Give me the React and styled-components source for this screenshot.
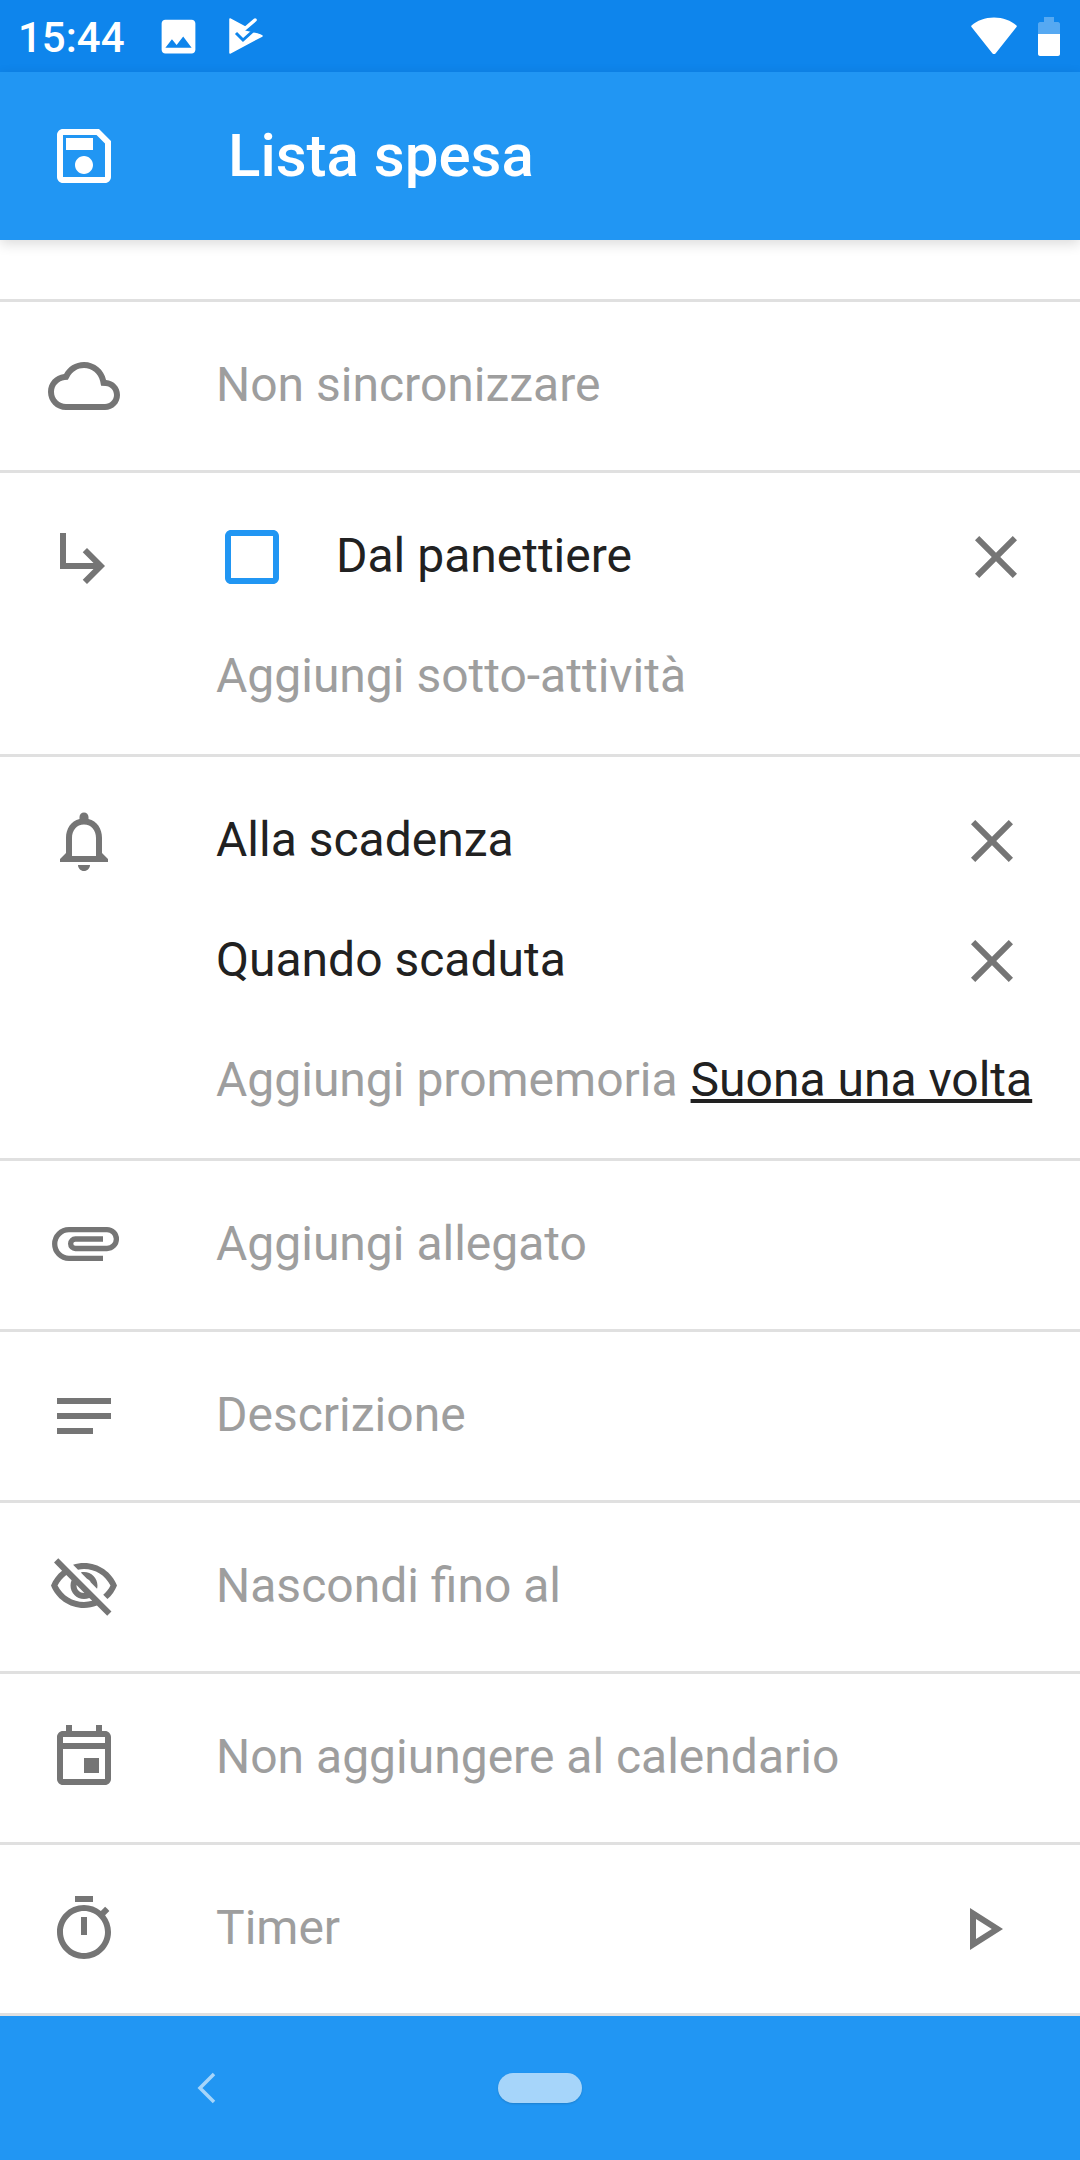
import React from "react";
import styled, { createGlobalStyle } from "styled-components";

const GlobalStyle = createGlobalStyle`
  html, body {
    margin: 0;
    padding: 0;
    background: #fff;
  }
  * {
    box-sizing: border-box;
  }
`;

const Screen = styled.div`
  width: 1080px;
  height: 2160px;
  display: flex;
  flex-direction: column;
  background: #fff;
  font-family: Roboto, sans-serif;
  overflow: hidden;
`;

const StatusBar = styled.div`
  height: 72px;
  flex: none;
  background: #0e85ec;
  display: flex;
  align-items: center;
  padding: 0 20px 0 18px;
  color: #fff;
`;

const Clock = styled.span`
  font-size: 42px;
  font-weight: 500;
  margin: 3px 31px 0 0;
`;

const StatusSpacer = styled.div`
  flex: 1;
`;

const Toolbar = styled.div`
  height: 168px;
  flex: none;
  background: #2196f3;
  display: flex;
  align-items: center;
  padding-left: 48px;
  position: relative;
  box-shadow: 0 4px 12px rgba(0, 0, 0, 0.14);
`;

const Title = styled.span`
  margin: 0 0 2px 108px;
  color: #fff;
  font-size: 60px;
  font-weight: 500;
`;

const Content = styled.div`
  flex: 1;
  padding-top: 59px;
  display: flex;
  flex-direction: column;
`;

const Row = styled.div`
  border-top: 3px solid #e0e0e0;
  display: flex;
  padding: 48px 0 0 48px;
  height: ${(p) => p.$height}px;
`;

const EndRule = styled.div`
  border-top: 3px solid #e0e0e0;
`;

const RowBody = styled.div`
  flex: 1;
  margin-left: 96px;
  display: flex;
  flex-direction: column;
  min-width: 0;
`;

const Line = styled.div`
  display: flex;
  align-items: center;
  height: 72px;
  margin-bottom: ${(p) => p.$gap || 0}px;
`;

const Hint = styled.span`
  font-size: 48px;
  color: #9e9e9e;
  white-space: nowrap;
  margin-bottom: 3px;
  flex: ${(p) => (p.$grow ? 1 : "none")};
`;

const Label = styled.span`
  font-size: 48px;
  color: #212121;
  flex: 1;
  white-space: nowrap;
  margin-bottom: 3px;
`;

const SubLabel = styled(Label)`
  margin-left: 48px;
`;

const RingLink = styled.span`
  font-size: 48px;
  color: #212121;
  text-decoration: underline;
  margin: 0 0 3px 13px;
  white-space: nowrap;
`;

const Glyph = styled.svg`
  flex: none;
  width: ${(p) => p.$size || 72}px;
  height: ${(p) => p.$size || 72}px;
  fill: ${(p) => p.$color || "#757575"};
  margin-right: ${(p) => p.$right || 0}px;
`;

const NavBar = styled.div`
  flex: none;
  height: 144px;
  background: #2196f3;
  display: flex;
  align-items: center;
  padding-left: 196px;
`;

const NavPill = styled.div`
  width: 84px;
  height: 30px;
  margin-left: 282px;
  border-radius: 15px;
  background: #a6d5fa;
  box-shadow: 0 1px 2px rgba(0, 0, 0, 0.15);
`;

const paths = {
  save: "M17 3H5c-1.11 0-2 .9-2 2v14c0 1.1.89 2 2 2h14c1.1 0 2-.9 2-2V7l-4-4zm2 16H5V5h11.17L19 7.83V19zm-7-7c-1.66 0-3 1.34-3 3s1.34 3 3 3 3-1.34 3-3-1.34-3-3-3zM6 6h9v4H6z",
  cloud: "M19.35 10.04C18.67 6.59 15.64 4 12 4 9.11 4 6.6 5.64 5.35 8.04 2.34 8.36 0 10.91 0 14c0 3.31 2.69 6 6 6h13c2.76 0 5-2.24 5-5 0-2.64-2.05-4.78-4.65-4.96zM19 18H6c-2.21 0-4-1.79-4-4 0-2.05 1.53-3.76 3.56-3.97l1.07-.11.5-.95C8.08 7.14 9.94 6 12 6c2.62 0 4.88 1.86 5.39 4.43l.3 1.5 1.53.11c1.56.1 2.78 1.41 2.78 2.96 0 1.65-1.35 3-3 3z",
  subtask: "M19 15l-6 6-1.42-1.42L15.17 16H4V4h2v10h9.17l-3.59-3.58L13 9l6 6z",
  box: "M19 5v14H5V5h14m0-2H5c-1.1 0-2 .9-2 2v14c0 1.1.9 2 2 2h14c1.1 0 2-.9 2-2V5c0-1.1-.9-2-2-2z",
  close: "M19 6.41L17.59 5 12 10.59 6.41 5 5 6.41 10.59 12 5 17.59 6.41 19 12 13.41 17.59 19 19 17.59 13.41 12z",
  bell: "M12 22c1.1 0 2-.9 2-2h-4c0 1.1.9 2 2 2zm6-6v-5c0-3.07-1.63-5.64-4.5-6.32V4c0-.83-.67-1.5-1.5-1.5s-1.5.67-1.5 1.5v.68C7.64 5.36 6 7.92 6 11v5l-2 2v1h16v-1l-2-2zm-2 1H8v-6c0-2.48 1.51-4.5 4-4.5s4 2.02 4 4.5v6z",
  notes: "M3 18h12v-2H3v2zM3 6v2h18V6H3zm0 7h18v-2H3v2z",
  hide: "M12 6c3.79 0 7.17 2.13 8.82 5.5-.59 1.22-1.42 2.27-2.41 3.12l1.41 1.41c1.39-1.23 2.49-2.77 3.18-4.53C21.27 7.11 17 4 12 4c-1.27 0-2.49.2-3.64.57l1.65 1.65C10.66 6.09 11.32 6 12 6zm-1.07 1.14L13 9.21c.57.25 1.03.71 1.28 1.28l2.07 2.07c.08-.34.14-.7.14-1.07C16.5 9.01 14.48 7 12 7c-.37 0-.72.05-1.07.14zM2.01 3.87l2.68 2.68C3.06 7.83 1.77 9.53 1 11.5 2.73 15.89 7 19 12 19c1.52 0 2.98-.29 4.32-.82l3.42 3.42 1.41-1.41L3.42 2.45 2.01 3.87zm7.5 7.5l2.61 2.61c-.04.01-.08.02-.12.02-1.38 0-2.5-1.12-2.5-2.5 0-.05.01-.08.01-.13zm-3.4-3.4l1.75 1.75c-.23.55-.36 1.15-.36 1.78 0 2.48 2.02 4.5 4.5 4.5.63 0 1.23-.13 1.77-.36l.98.98c-.88.24-1.8.38-2.75.38-3.79 0-7.17-2.13-8.82-5.5.7-1.43 1.72-2.61 2.93-3.53z",
  event: "M17 12h-5v5h5v-5zM16 1v2H8V1H6v2H5c-1.11 0-2 .9-2 2v14c0 1.1.9 2 2 2h14c1.1 0 2-.9 2-2V5c0-1.1-.9-2-2-2h-1V1h-2zM19 19H5V9h14v10zM19 7H5V5h14v2z",
  timer: "M15 1H9v2h6V1zm-4 13h2V8h-2v6zm8.03-6.61l1.42-1.42c-.43-.51-.9-.99-1.41-1.41l-1.42 1.42C16.07 4.74 14.12 4 12 4c-4.97 0-9 4.03-9 9s4.02 9 9 9 9-4.03 9-9c0-2.12-.74-4.07-1.97-5.61zM12 20c-3.87 0-7-3.13-7-7s3.13-7 7-7 7 3.13 7 7-3.13 7-7 7z",
  play: "M10 8.64L15.27 12 10 15.36V8.64M8 5v14l11-7L8 5z",
  image: "M21 19V5c0-1.1-.9-2-2-2H5c-1.1 0-2 .9-2 2v14c0 1.1.9 2 2 2h14c1.1 0 2-.9 2-2zM8.5 13.5l2.5 3.01L14.5 12l4.5 6H5l3.5-4.5z",
};

const Icon = ({ name, ...rest }) => (
  <Glyph viewBox="0 0 24 24" {...rest}>
    <path d={paths[name]} />
  </Glyph>
);

// wider than the stock material attachment path
const ClipIcon = () => (
  <Glyph viewBox="0 0 72 72" $color="none">
    <path
      d="M55 49.3H21A14.3 14.3 0 0 1 21 20.7H59A9.4 9.4 0 0 1 59 39.5H27.4A4.75 4.75 0 0 1 27.4 30H55"
      stroke="#757575"
      strokeWidth="5.3"
    />
  </Glyph>
);

const TasksLogo = () => (
  <Glyph viewBox="0 0 36 36" $size={36} $color="#fff" $right={0}>
    <path d="M1 1L33 18 1 35z" stroke="#fff" strokeWidth="1.5" strokeLinejoin="round" />
    <path d="M14 12L32 2V16z" fill="#0e85ec" />
    <path d="M7 15l7 7 10-9" fill="none" stroke="#0e85ec" strokeWidth="3" />
    <path d="M12 14L26 2" fill="none" stroke="#fff" strokeWidth="3.5" strokeLinecap="round" />
  </Glyph>
);

const Wifi = () => (
  <Glyph viewBox="0 0 46 37" $size={46} $color="#fff" $right={21}>
    <path d="M23 0c9 0 17 3 22.5 8 .5.5.5 1 0 1.5L24.5 36c-.8.8-2 .8-3 0L.5 9.5C0 9 0 8.5.5 8 6 3 14 0 23 0z" />
  </Glyph>
);

const Battery = () => (
  <svg width="22" height="39" viewBox="0 0 22 39">
    <path d="M6 0h10v5h4c1 0 2 1 2 2v10H0V7c0-1 1-2 2-2h4z" fill="#fff" opacity="0.3" />
    <path d="M0 17h22v20c0 1-1 2-2 2H2c-1 0-2-1-2-2z" fill="#fff" />
  </svg>
);

const BackChevron = () => (
  <svg width="20" height="32" viewBox="0 0 20 32" fill="none">
    <path d="M18 2L4 16l14 14" stroke="#a6d5fa" strokeWidth="3.5" />
  </svg>
);

const SimpleRow = ({ icon, children, right }) => (
  <Row $height={171}>
    {icon}
    <RowBody>
      <Line>
        <Hint $grow>{children}</Hint>
        {right}
      </Line>
    </RowBody>
  </Row>
);

export default function App() {
  return (
    <Screen>
      <GlobalStyle />
      <StatusBar>
        <Clock>15:44</Clock>
        <Icon name="image" $size={45} $color="#fff" $right={28} />
        <TasksLogo />
        <StatusSpacer />
        <Wifi />
        <Battery />
      </StatusBar>
      <Toolbar>
        <Icon name="save" $color="#fff" />
        <Title>Lista spesa</Title>
      </Toolbar>
      <Content>
        <SimpleRow icon={<Icon name="cloud" />}>Non sincronizzare</SimpleRow>
        <Row $height={284}>
          <Icon name="subtask" />
          <RowBody>
            <Line $gap={48}>
              <Icon name="box" $color="#2196f3" />
              <SubLabel>Dal panettiere</SubLabel>
              <Icon name="close" $right={48} />
            </Line>
            <Line>
              <Hint>Aggiungi sotto-attività</Hint>
            </Line>
          </RowBody>
        </Row>
        <Row $height={404}>
          <Icon name="bell" />
          <RowBody>
            <Line $gap={48}>
              <Label>Alla scadenza</Label>
              <Icon name="close" $right={52} />
            </Line>
            <Line $gap={48}>
              <Label>Quando scaduta</Label>
              <Icon name="close" $right={52} />
            </Line>
            <Line>
              <Hint>Aggiungi promemoria</Hint>
              <RingLink>Suona una volta</RingLink>
            </Line>
          </RowBody>
        </Row>
        <SimpleRow icon={<ClipIcon />}>Aggiungi allegato</SimpleRow>
        <SimpleRow icon={<Icon name="notes" />}>Descrizione</SimpleRow>
        <SimpleRow icon={<Icon name="hide" />}>Nascondi fino al</SimpleRow>
        <SimpleRow icon={<Icon name="event" />}>Non aggiungere al calendario</SimpleRow>
        <SimpleRow icon={<Icon name="timer" />} right={<Icon name="play" $right={62} />}>
          Timer
        </SimpleRow>
        <EndRule />
      </Content>
      <NavBar>
        <BackChevron />
        <NavPill />
      </NavBar>
    </Screen>
  );
}
